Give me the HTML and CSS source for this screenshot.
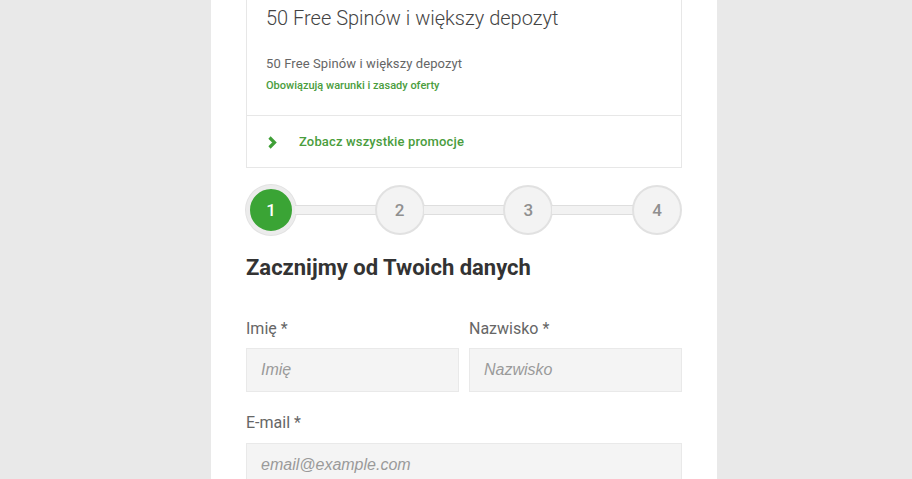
FILE: index.html
```html
<!DOCTYPE html>
<html lang="pl">
<head>
<meta charset="utf-8">
<title>Rejestracja</title>
<link rel="stylesheet" href="styles.css">
</head>
<body>
<div class="page">
  <div class="promo">
    <div class="promo-body">
      <div class="promo-title">50 Free Spinów i większy depozyt</div>
      <div class="promo-sub">50 Free Spinów i większy depozyt</div>
      <a class="promo-terms" href="#">Obowiązują warunki i zasady oferty</a>
    </div>
    <a class="promo-foot" href="#">
      <svg class="chev" width="10" height="13" viewBox="0 0 10 13"><path d="M2.5 1.5 L7.5 6.5 L2.5 11.5" fill="none" stroke="#3f9f37" stroke-width="3.2" stroke-linecap="butt" stroke-linejoin="miter"/></svg>
      <span>Zobacz wszystkie promocje</span>
    </a>
  </div>

  <div class="steps">
    <div class="step active">1</div>
    <div class="connector"></div>
    <div class="step">2</div>
    <div class="connector"></div>
    <div class="step">3</div>
    <div class="connector"></div>
    <div class="step">4</div>
  </div>

  <h2 class="heading">Zacznijmy od Twoich danych</h2>

  <div class="row">
    <div class="field">
      <label class="label">Imię *</label>
      <div class="input">Imię</div>
    </div>
    <div class="field">
      <label class="label">Nazwisko *</label>
      <div class="input">Nazwisko</div>
    </div>
  </div>
  <div class="field email">
    <label class="label">E-mail *</label>
    <div class="input">email@example.com</div>
  </div>
</div>
</body>
</html>
```

FILE: styles.css
```css
html, body {
  margin: 0;
  padding: 0;
}
body {
  background: #e9e9e9;
  font-family: Roboto, "Liberation Sans", Arial, sans-serif;
  color: #333;
  overflow: hidden;
}
.page {
  width: 436px;
  margin-left: 211px;
  padding: 0 35px 40px;
  background: #fff;
  min-height: 479px;
}
.promo {
  border: 1px solid #e7e7e7;
  border-top: none;
}
.promo-body {
  padding: 5px 19px 22px;
}
.promo-title {
  font-size: 20px;
  line-height: 26px;
  font-weight: 300;
  color: #444;
}
.promo-sub {
  margin-top: 25px;
  font-size: 13px;
  line-height: 16px;
  color: #666;
  letter-spacing: 0.1px;
}
.promo-terms {
  display: block;
  margin-top: 7px;
  font-size: 11px;
  line-height: 14px;
  font-weight: 500;
  color: #4a9d3d;
  text-decoration: none;
}
.promo-foot {
  display: flex;
  align-items: center;
  height: 51px;
  border-top: 1px solid #e7e7e7;
  padding-left: 20px;
  text-decoration: none;
  color: #4a9d3d;
  font-size: 13px;
  font-weight: 500;
  letter-spacing: 0.15px;
}
.promo-foot .chev {
  margin-right: 22px;
  margin-top: 1px;
}
.steps {
  display: flex;
  align-items: center;
  margin-top: 17px;
}
.step {
  box-sizing: border-box;
  width: 50px;
  height: 50px;
  flex: none;
  border-radius: 50%;
  background: #f3f3f3;
  border: 2px solid #e1e1e1;
  display: flex;
  align-items: center;
  justify-content: center;
  font-size: 17px;
  font-weight: 500;
  color: #8f8f8f;
}
.step.active {
  background: #3aa435;
  border: 4px solid #ececec;
  color: #fff;
  box-shadow: 0 0 0 1px #e2e2e2;
}
.connector {
  flex: 1;
  height: 8px;
  background: #f2f2f2;
  border-top: 1px solid #dedede;
  border-bottom: 1px solid #dedede;
  margin: 0 -1px;
}
.heading {
  margin: 19px 0 0;
  font-size: 22px;
  line-height: 28px;
  font-weight: 700;
  color: #333;
}
.row {
  display: flex;
  gap: 10px;
  margin-top: 37px;
}
.field {
  flex: 1;
  display: flex;
  flex-direction: column;
}
.label {
  font-size: 16px;
  line-height: 20px;
  color: #666;
}
.input {
  box-sizing: border-box;
  margin-top: 9px;
  height: 44px;
  background: #f4f4f4;
  border: 1px solid #e9e9e9;
  padding: 0 14px;
  display: flex;
  align-items: center;
  font-family: "Liberation Sans", Arial, sans-serif;
  font-style: italic;
  font-size: 16px;
  color: #9a9a9a;
}
.field.email {
  margin-top: 21px;
}
.field.email .input {
  margin-top: 10px;
}
```
